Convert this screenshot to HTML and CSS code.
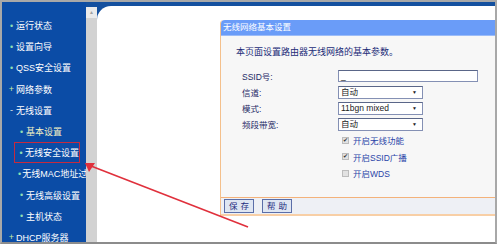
FILE: index.html
```html
<!DOCTYPE html>
<html lang="zh-CN">
<head>
    <meta charset="UTF-8">
    <title>无线网络基本设置</title>
    <link rel="stylesheet" href="styles.css">
</head>
<body>
    <div class="screen">
        <div class="menu">
            <div class="item"><span class="dot">•</span>运行状态</div>
            <div class="item"><span class="dot">•</span>设置向导</div>
            <div class="item"><span class="dot">•</span>QSS安全设置</div>
            <div class="item"><span class="dot plus">+</span>网络参数</div>
            <div class="item"><span class="dot minus">-</span>无线设置</div>
            <div class="item sub picked"><span class="dot">•</span>基本设置</div>
            <div class="item sub current"><span class="dot">•</span>无线安全设置</div>
            <div class="item sub"><span class="dot">•</span>无线MAC地址过滤</div>
            <div class="item sub"><span class="dot">•</span>无线高级设置</div>
            <div class="item sub"><span class="dot">•</span>主机状态</div>
            <div class="item"><span class="dot plus">+</span>DHCP服务器</div>
        </div>

        <div class="right">
            <div class="scroll"><div class="scroll-btn">▲</div></div>
            <div class="main">
                <div class="panel">
                    <div class="panel-head">无线网络基本设置</div>
                    <div class="panel-body">
                        <p class="intro">本页面设置路由器无线网络的基本参数。</p>

                        <div class="form-row">
                            <span class="label">SSID号:</span>
                            <span class="field wide">_</span>
                        </div>
                        <div class="form-row">
                            <span class="label">信道:</span>
                            <span class="field select">自动<span class="caret">▼</span></span>
                        </div>
                        <div class="form-row">
                            <span class="label">模式:</span>
                            <span class="field select">11bgn mixed<span class="caret">▼</span></span>
                        </div>
                        <div class="form-row">
                            <span class="label">频段带宽:</span>
                            <span class="field select">自动<span class="caret">▼</span></span>
                        </div>

                        <div class="check-row"><span class="box">✔</span>开启无线功能</div>
                        <div class="check-row"><span class="box">✔</span>开启SSID广播</div>
                        <div class="check-row"><span class="box"></span>开启WDS</div>
                    </div>
                    <div class="panel-foot">
                        <button type="button">保存</button>
                        <button type="button">帮助</button>
                    </div>
                </div>
            </div>
        </div>

        <svg class="arrow" width="497" height="244" viewBox="0 0 497 244">
            <line x1="248" y1="227" x2="91" y2="166" stroke="#e0303c" stroke-width="1.6"/>
            <polygon points="85,163 95,163 89,172" fill="#e0303c"/>
        </svg>
    </div>
</body>
</html>
```

FILE: styles.css
```css
body {
    margin: 0;
    font-family: "Liberation Sans", "Noto Sans CJK SC", sans-serif;
}

.screen {
    position: relative;
    width: 497px;
    height: 244px;
    box-sizing: border-box;
    border: 2px solid #a8a8a8;
    border-bottom-color: #8c8c8c;
    display: flex;
    overflow: hidden;
    background: #ffffff;
}

/* left menu */
.menu {
    width: 84px;
    flex-shrink: 0;
    background-color: #0b4ca6;
    padding-top: 13px;
    overflow: hidden;
}

.item {
    height: 21.2px;
    display: flex;
    align-items: center;
    white-space: nowrap;
    font-size: 9px;
    color: #ffffff;
    padding-left: 6px;
}

.item.sub {
    padding-left: 16px;
}

.item.picked {
    color: #f2f0c4;
}

.item.current {
    margin-left: 12px;
    width: 66px;
    padding-left: 3px;
    box-sizing: border-box;
    border: 1px solid #c62a3e;
}

.dot {
    width: 7px;
    color: #8fe0b4;
    font-size: 9px;
    text-align: center;
    margin-right: 1px;
}

.dot.plus {
    color: #c8f0a0;
}

.dot.minus {
    color: #e8e8e8;
}

/* right side */
.right {
    flex: 1;
    display: flex;
    background-color: #14509f;
    padding-top: 4px;
    overflow: hidden;
}

.scroll {
    width: 11px;
    flex-shrink: 0;
    margin-top: 1px;
    background-color: #d2d2d2;
}

.scroll-btn {
    height: 11px;
    background-color: #ebebeb;
    color: #a0a0a0;
    font-size: 5px;
    line-height: 11px;
    text-align: center;
}

.main {
    flex: 1;
    background: #ffffff;
    border-top-left-radius: 14px;
    padding: 14px 0 0 123px;
    overflow: hidden;
}

.panel {
    width: 300px;
    border-left: 1px solid #f4c08c;
    border-top-left-radius: 4px;
}

.panel-head {
    height: 15px;
    line-height: 15px;
    background-color: #6a9cf8;
    border-bottom: 1px solid #9cbcf8;
    border-top-left-radius: 4px;
    color: #ffffff;
    font-size: 8.5px;
    padding-left: 2px;
}

.panel-body {
    height: 161px;
    box-sizing: border-box;
    background-color: #f7f7f7;
    padding-top: 11px;
}

.intro {
    margin: 0 0 10px 15px;
    height: 11px;
    line-height: 11px;
    font-size: 9px;
    color: #1c2c78;
}

.form-row {
    height: 16px;
    display: flex;
    align-items: center;
}

.label {
    width: 96px;
    padding-left: 21px;
    font-size: 8.5px;
    color: #1e2a66;
}

.field {
    height: 12px;
    box-sizing: border-box;
    background: #ffffff;
    border: 1px solid #8490b4;
    border-top-color: #5a6688;
    font-size: 8.5px;
    line-height: 10px;
    padding-left: 2px;
    color: #222222;
    position: relative;
}

.field.wide {
    width: 140px;
}

.field.select {
    width: 85px;
    height: 13px;
}

.caret {
    position: absolute;
    right: 5px;
    top: 0;
    font-size: 5px;
    color: #222222;
}

.check-row {
    height: 16.5px;
    display: flex;
    align-items: center;
    padding-left: 121px;
    font-size: 8.5px;
    color: #2a44a8;
}

.box {
    width: 7px;
    height: 7px;
    box-sizing: border-box;
    background: #e2e2e2;
    border: 1px solid #bcbcbc;
    margin-right: 4px;
    font-size: 6px;
    line-height: 5px;
    color: #333333;
    text-align: center;
}

.panel-foot {
    height: 16px;
    background-color: #eef0f5;
    border-top: 1px solid #f4b27a;
    border-bottom: 2px solid #f8cfa6;
    display: flex;
    align-items: center;
    gap: 8px;
    padding-left: 3px;
}

button {
    width: 30px;
    height: 14px;
    padding: 0;
    background-color: #dfe6f2;
    border: 1px solid #5b6ea8;
    color: #1e2c80;
    font-family: "Liberation Sans", "Noto Sans CJK SC", sans-serif;
    font-size: 8.5px;
    letter-spacing: 3px;
    text-indent: 3px;
    line-height: 12px;
}

/* callout arrow over the page */
.arrow {
    position: absolute;
    left: -2px;
    top: -2px;
    pointer-events: none;
}
```
